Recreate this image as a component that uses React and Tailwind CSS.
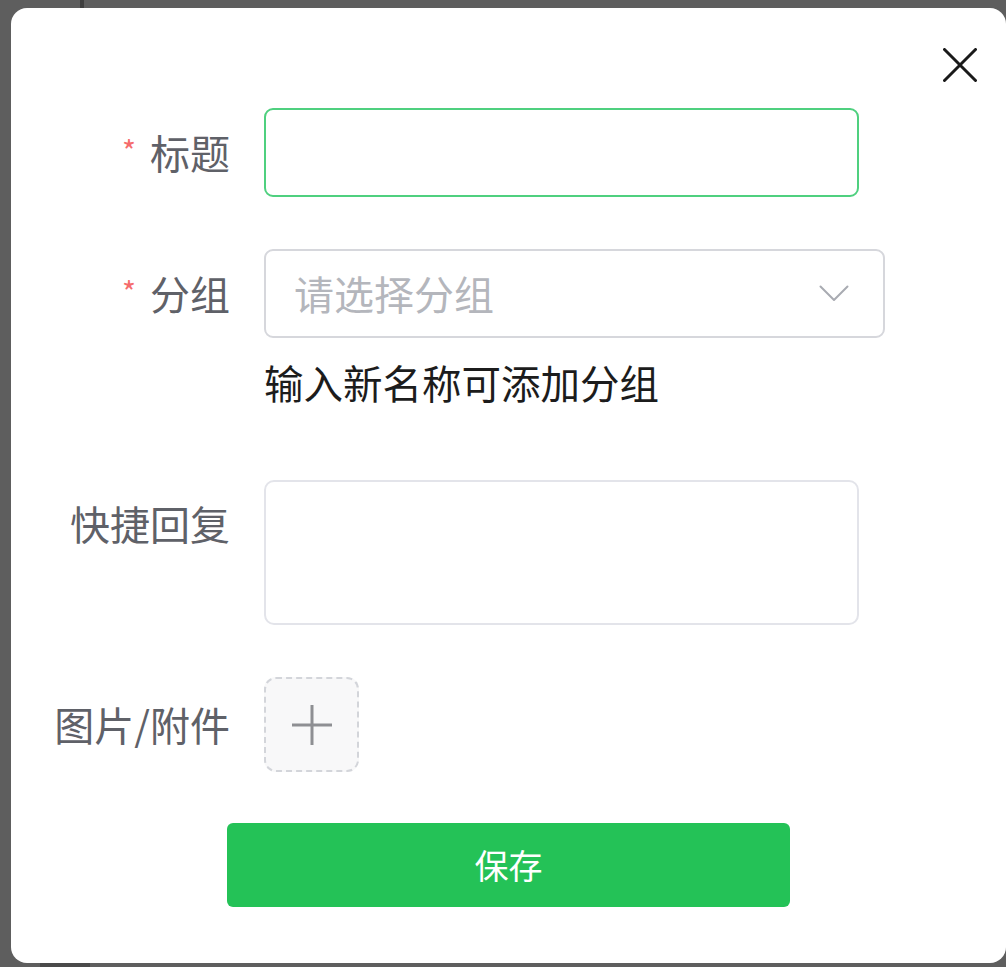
import React from "react";

const font = { fontFamily: '"Noto Sans CJK SC", "Noto Sans", sans-serif' };

function Label({ children, required, className = "" }) {
  return (
    <div className={"w-[219px] shrink-0 flex justify-end items-center text-[40px] leading-[48px] text-[#5f6168] " + className}>
      {required && <span className="text-[30px] leading-none text-[#f56c6c] mr-[14px] -mt-[6px]">*</span>}
      <span className="-mt-[2px]">{children}</span>
    </div>
  );
}

export default function App() {
  return (
    <div className="relative h-[967px] w-[1006px] overflow-hidden bg-[#5e5e5e]" style={font}>
      <div className="absolute left-[80px] top-0 h-[20px] w-[4px] bg-[#3f3f3f]" />
      <div className="absolute left-[40px] bottom-0 h-[8px] w-[50px] bg-[#4a4a4a]" />
      <div className="absolute left-[11px] top-[8px] h-[955px] w-[995px] rounded-[16px] bg-white">
        <button className="absolute right-[29px] top-[40px] h-[34px] w-[34px]" aria-label="close">
          <svg viewBox="0 0 34 34" className="h-[34px] w-[34px]">
            <path d="M1.5 1.5 L32.5 32.5 M32.5 1.5 L1.5 32.5" stroke="#1a1a1a" strokeWidth="3" strokeLinecap="round" fill="none" />
          </svg>
        </button>

        <div className="flex flex-col pt-[100px]">
          <div className="flex items-center">
            <Label required>标题</Label>
            <div className="ml-[34px] h-[89px] w-[595px] rounded-[9px] border-2 border-[#4fd07f] bg-white" />
          </div>

          <div className="mt-[52px] flex items-center">
            <Label required>分组</Label>
            <div className="ml-[34px] flex h-[89px] w-[621px] items-center justify-between rounded-[9px] border-2 border-[#d6d7dc] bg-white pl-[28px] pr-[34px]">
              <span className="-mt-[2px] text-[40px] leading-[48px] text-[#b4b6bc]">请选择分组</span>
              <svg viewBox="0 0 30 17" className="h-[17px] w-[30px]">
                <path d="M1.5 1.5 L15 15 L28.5 1.5" stroke="#a9abb2" strokeWidth="2" fill="none" strokeLinejoin="round" strokeLinecap="round" />
              </svg>
            </div>
          </div>

          <div className="ml-[253px] mt-[20px] text-[39.5px] leading-[48px] text-[#1c1c1c]">输入新名称可添加分组</div>

          <div className="mt-[74px] flex items-start">
            <Label className="pt-[21px]">快捷回复</Label>
            <div className="ml-[34px] h-[145px] w-[595px] rounded-[10px] border-2 border-[#e3e4ea] bg-white" />
          </div>

          <div className="mt-[52px] flex items-center">
            <Label>图片/附件</Label>
            <div className="ml-[34px] flex h-[95px] w-[95px] items-center justify-center rounded-[12px] border-2 border-dashed border-[#d3d5da] bg-[#f8f8f9]">
              <svg viewBox="0 0 42 42" className="h-[42px] w-[42px]">
                <path d="M21 1 V41 M1 21 H41" stroke="#8e8f93" strokeWidth="3" fill="none" />
              </svg>
            </div>
          </div>

          <button className="mx-auto mt-[51px] flex h-[84px] w-[563px] items-center justify-center rounded-[6px] bg-[#24c257] text-[34px] leading-[40px] text-white">
            保存
          </button>
        </div>
      </div>
    </div>
  );
}
